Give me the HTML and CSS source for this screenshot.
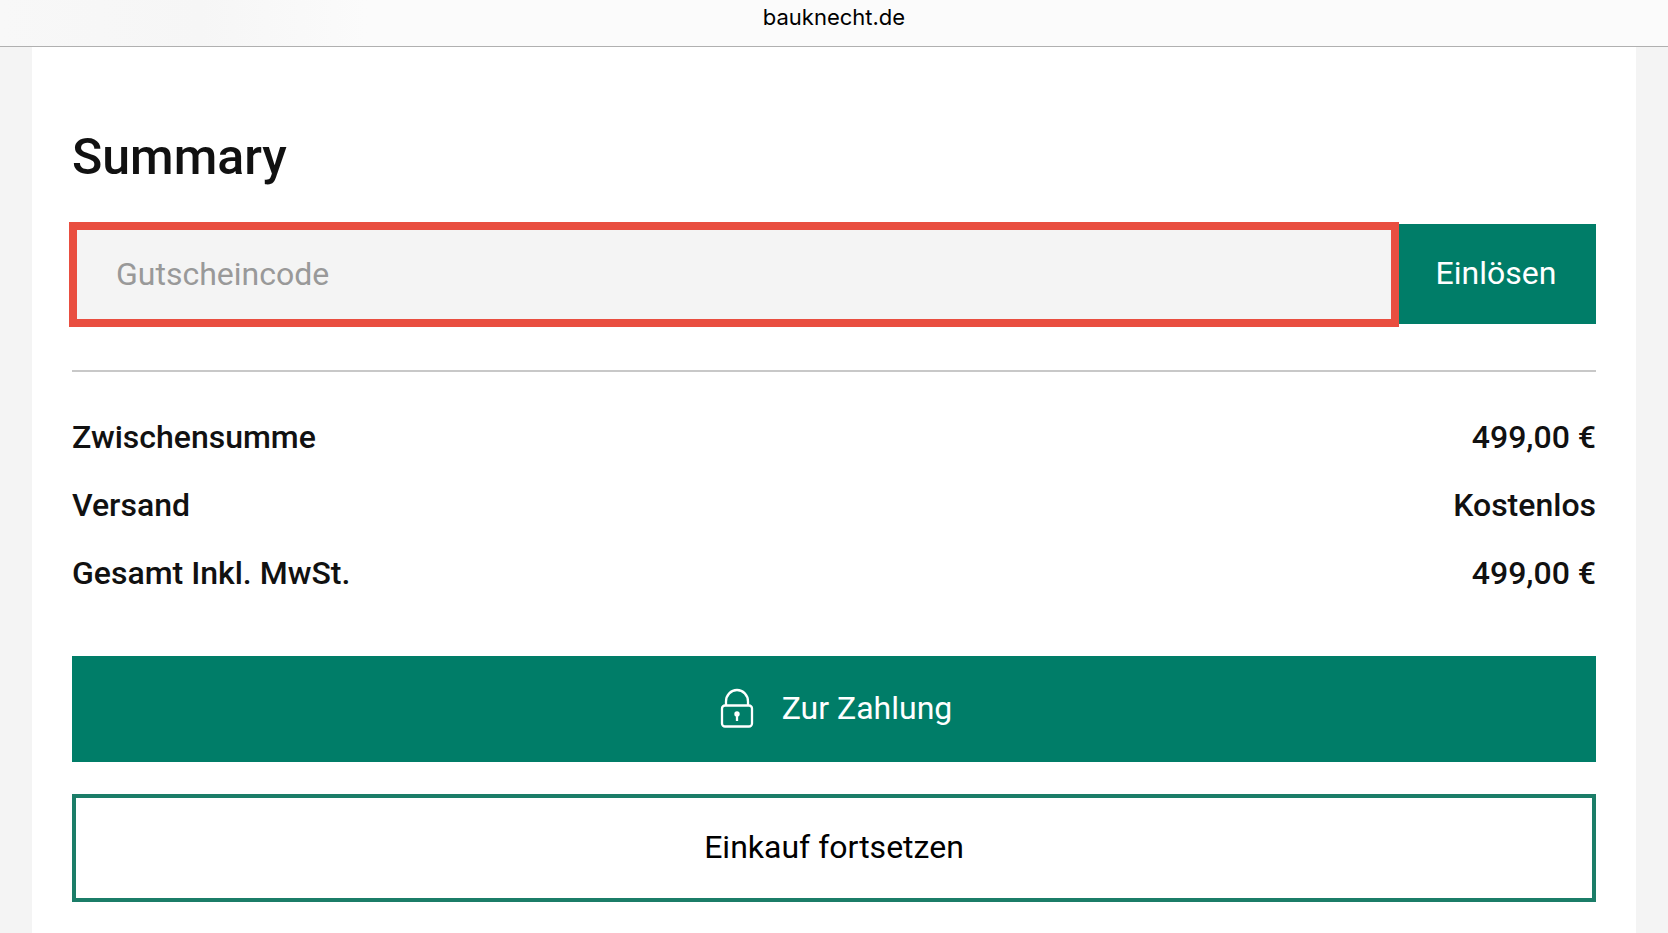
FILE: index.html
```html
<!DOCTYPE html>
<html lang="de">
<head>
<meta charset="utf-8">
<meta name="viewport" content="width=device-width, initial-scale=1">
<title>bauknecht.de</title>
<link rel="stylesheet" href="styles.css">
</head>
<body>
<header class="address-bar">bauknecht.de</header>
<main class="summary">
  <h1 class="summary-title">Summary</h1>
  <form class="coupon">
    <input class="coupon-input" type="text" placeholder="Gutscheincode" aria-label="Gutscheincode">
    <button class="coupon-submit" type="button">Einlösen</button>
  </form>
  <dl class="totals">
    <div class="totals-row"><dt>Zwischensumme</dt><dd>499,00 €</dd></div>
    <div class="totals-row"><dt>Versand</dt><dd>Kostenlos</dd></div>
    <div class="totals-row"><dt>Gesamt Inkl. MwSt.</dt><dd>499,00 €</dd></div>
  </dl>
  <div class="actions">
    <button class="action action-primary" type="button">
      <svg class="lock" width="34" height="40" viewBox="0 0 34 40" fill="none" stroke="currentColor" stroke-width="2.300" aria-hidden="true">
        <rect x="2" y="17.500" width="30" height="21" rx="3"/>
        <path d="M6 17.500v-4a11 11.500 0 0 1 22 0v4"/>
        <circle cx="17" cy="26" r="2.700" fill="currentColor" stroke="none"/>
        <path d="M17 26v7"/>
      </svg>
      <span>Zur Zahlung</span>
    </button>
    <button class="action action-secondary" type="button">Einkauf fortsetzen</button>
  </div>
</main>
</body>
</html>
```

FILE: styles.css
```css
* {
  box-sizing: border-box;
}

body {
  margin: 0;
  min-height: 100vh;
  display: flex;
  flex-direction: column;
  background: #f4f4f4;
  color: #111;
  font-family: Roboto, "Liberation Sans", sans-serif;
  font-size: 32px;
}

.address-bar {
  height: 47px;
  border-bottom: 1px solid #b0b0b0;
  background: linear-gradient(90deg, #f8f8f8 0%, #f6f6f6 12%, #fbfbfb 22%, #fbfbfb 100%);
  color: #000;
  font-family: Inter, "Liberation Sans", sans-serif;
  font-size: 22px;
  line-height: 35px;
  text-align: center;
}

.summary {
  flex: 1;
  margin: 0 32px;
  padding: 80px 40px 31px;
  background: #fff;
}

.summary-title {
  margin: 0 0 35px;
  font-size: 50px;
  font-weight: 500;
  line-height: 60px;
}

.coupon {
  display: flex;
  align-items: flex-start;
  margin: 0 0 0 -3px;
}

.coupon-input {
  flex: 1;
  min-width: 0;
  height: 105px;
  padding: 0 39px 2px;
  border: 8px solid #e94e40;
  border-radius: 0;
  outline: 0;
  background: #f4f4f4;
  color: #111;
  font: inherit;
}

.coupon-input::placeholder {
  color: #999;
  opacity: 1;
}

.coupon-submit {
  height: 100px;
  width: 197px;
  margin: 2px 0 0;
  border: 0;
  padding: 0 3px 2px 0;
  background: #007d68;
  color: #fff;
  font: inherit;
}

.totals {
  margin: 43px 0 49px;
  padding-top: 31px;
  border-top: 2px solid #c8c8c8;
  font-weight: 500;
  line-height: 68px;
}

.totals-row {
  display: flex;
  justify-content: space-between;
}

.totals-row dd {
  margin: 0;
}

.actions {
  display: flex;
  flex-direction: column;
  gap: 32px;
}

.action {
  display: flex;
  align-items: center;
  justify-content: center;
  gap: 28px;
  width: 100%;
  padding: 0 0 2px;
  font: inherit;
}

.action-primary {
  height: 106px;
  padding-left: 4px;
  border: 0;
  background: #007d68;
  color: #fff;
}

.action-secondary {
  height: 108px;
  border: 4px solid #1b7d68;
  background: #fff;
  color: #000;
}
```
